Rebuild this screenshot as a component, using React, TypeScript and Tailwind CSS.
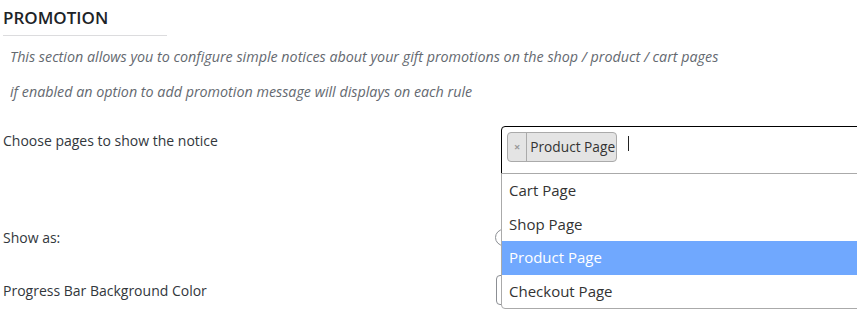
import React from 'react';

const options = ['Cart Page', 'Shop Page', 'Product Page', 'Checkout Page'];

export default function App() {
    return (
        <div className="w-[857px] h-[322px] overflow-hidden bg-white font-['Open_Sans',sans-serif] text-[#32373c]">
            {/* Section heading */}
            <div className="pl-[3px] pt-[6px]">
                <h2 className="w-[164px] border-b border-[#dcdcde] pb-[5px] text-[17px] leading-[24px] font-semibold text-[#1d2327]">
                    PROMOTION
                </h2>
            </div>

            {/* Description */}
            <div className="pl-[10px] pt-[11px] text-[14.3px] italic text-[#646970]">
                <p className="leading-[20px]">
                    This section allows you to configure simple notices about your gift promotions on the shop / product / cart pages
                </p>
                <p className="mt-[15px] leading-[20px]">
                    if enabled an option to add promotion message will displays on each rule
                </p>
            </div>

            {/* Form rows */}
            <div className="mt-[24px] pl-[3px]">
                <div className="flex h-[87px]">
                    <label className="w-[498px] shrink-0 pt-[5px] text-[14px] leading-[20px]">
                        Choose pages to show the notice
                    </label>
                    <div className="relative w-[420px] shrink-0">
                        <div className="flex h-[48px] items-start rounded-tl-[4px] border border-black bg-white px-[5px] pt-[5px]">
                            <span className="flex h-[30px] items-center rounded-[4px] border border-[#aaa] bg-[#e4e4e4] text-[13.7px] text-[#333]">
                                <span className="flex h-full items-center border-r border-[#aaa] px-[6px] text-[11px] font-bold text-[#999]">×</span>
                                <span className="pl-[3px] pr-[1px]">Product Page</span>
                            </span>
                            <span className="ml-[11px] mt-[4px] h-[15px] w-px bg-[#222]" />
                        </div>

                        {/* Open dropdown */}
                        <ul className="absolute left-0 top-[47px] z-10 w-full rounded-b-[4px] border border-[#aaa] bg-white text-[15px] text-[#333]">
                            {options.map((o) => (
                                <li
                                    key={o}
                                    className={
                                        o === 'Product Page'
                                            ? 'h-[33.5px] bg-[#70a8fe] px-[7px] leading-[33.5px] text-white'
                                            : 'h-[33.5px] px-[7px] leading-[33.5px]'
                                    }
                                >
                                    {o}
                                </li>
                            ))}
                        </ul>
                    </div>
                </div>

                <div className="flex h-[49px] items-center">
                    <label className="w-[492px] shrink-0 text-[14px]">Show as:</label>
                    <span className="h-[17px] w-[17px] rounded-full border border-[#8c8f94] bg-white" />
                </div>

                <div className="flex h-[56px] items-center">
                    <label className="w-[493px] shrink-0 text-[14px]">Progress Bar Background Color</label>
                    <span className="h-[30px] w-[200px] rounded-[4px] border border-[#8c8f94] bg-white" />
                </div>
            </div>
        </div>
    );
}
